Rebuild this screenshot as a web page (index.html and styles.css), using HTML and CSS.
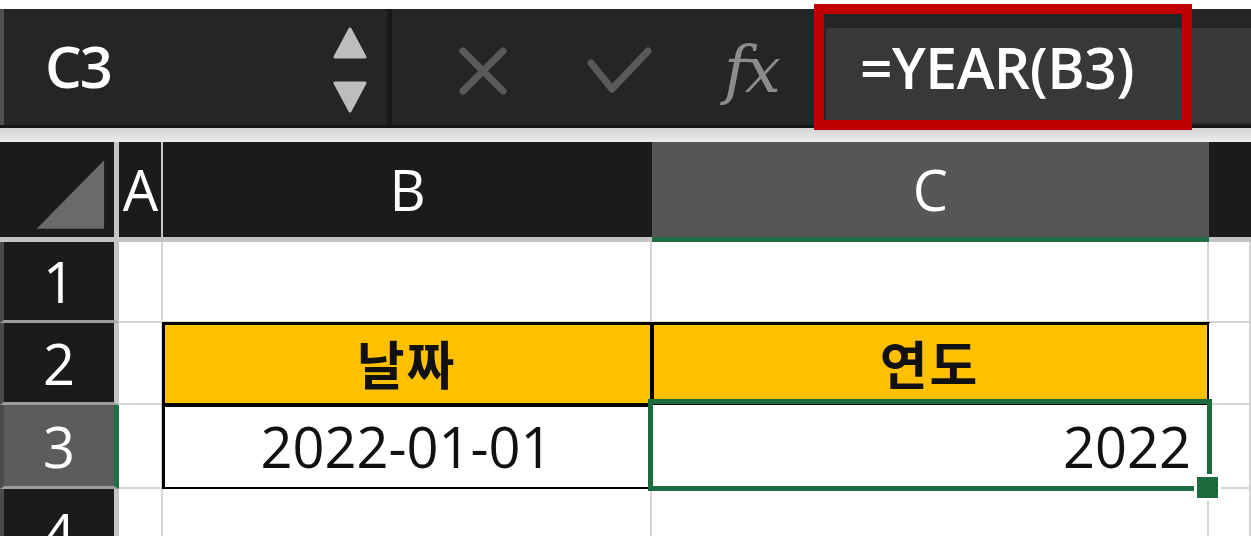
FILE: index.html
```html
<!DOCTYPE html>
<html lang="ko">
<head>
    <meta charset="UTF-8">
    <meta name="viewport" content="width=device-width, initial-scale=1.0">
    <title>YEAR 함수</title>
    <link rel="stylesheet" href="styles.css">
</head>
<body>
    <div class="toolbar">
        <div class="namebox">
            <span class="ref">C3</span>
            <svg class="spin" width="34" height="86" viewBox="0 0 34 86">
                <path d="M17 2 L32 30 L2 30 Z" />
                <path d="M2 56 L32 56 L17 84 Z" />
            </svg>
        </div>
        <div class="divider"></div>
        <div class="actions">
            <svg class="cancel" width="50" height="50" viewBox="0 0 50 50">
                <path d="M5 5 L45 45 M45 5 L5 45" />
            </svg>
            <svg class="enter" width="66" height="50" viewBox="0 0 66 50">
                <path d="M5 17 L26 43 L62 5" />
            </svg>
            <span class="fx">fx</span>
        </div>
        <div class="formula">=YEAR(B3)</div>
        <div class="highlight"></div>
    </div>
    <div class="rule"></div>

    <div class="sheet">
        <div class="corner">
            <svg width="115" height="95" viewBox="0 0 115 95">
                <path d="M37 87 L105 87 L105 18 Z" />
            </svg>
        </div>
        <div class="colhead col-a">A</div>
        <div class="colhead col-b">B</div>
        <div class="colhead col-c active">C</div>
        <div class="colhead col-d"></div>

        <div class="rowhead">1</div>
        <div class="cell"></div>
        <div class="cell"></div>
        <div class="cell"></div>
        <div class="cell"></div>

        <div class="rowhead">2</div>
        <div class="cell"></div>
        <div class="cell boxed title">날짜</div>
        <div class="cell boxed title">연도</div>
        <div class="cell"></div>

        <div class="rowhead active">3</div>
        <div class="cell"></div>
        <div class="cell boxed plain">2022-01-01</div>
        <div class="cell plain number selected">2022</div>
        <div class="cell"></div>

        <div class="rowhead">4</div>
        <div class="cell"></div>
        <div class="cell"></div>
        <div class="cell"></div>
        <div class="cell"></div>
    </div>
</body>
</html>
```

FILE: styles.css
```css
body {
    margin: 0;
    background: #ffffff;
    font-family: 'Open Sans', 'Noto Sans', sans-serif;
    overflow: hidden;
    height: 536px;
}
.toolbar {
    position: relative;
    display: flex;
    height: 116px;
    margin-top: 9px;
    background: #252525;
    border-left: 4px solid #505050;
}
.namebox {
    display: flex;
    align-items: center;
    width: 383px;
    padding-left: 41px;
    box-sizing: border-box;
}
.ref {
    color: #ffffff;
    font-size: 58px;
    font-weight: 600;
    letter-spacing: -2px;
    line-height: 1;
    margin-top: -2px;
}
.spin {
    margin-left: auto;
    margin-right: 20px;
    margin-top: 6px;
}
.spin path {
    fill: #bdbdbd;
    stroke: #bdbdbd;
    stroke-width: 3;
    stroke-linejoin: round;
}
.divider {
    width: 5px;
    background: #181818;
}
.actions {
    display: flex;
    align-items: center;
    width: 434px;
}
.actions svg path {
    fill: none;
    stroke: #5a5a5a;
    stroke-width: 7;
    stroke-linecap: round;
    stroke-linejoin: round;
}
.cancel {
    margin-left: 66px;
    margin-top: 8px;
}
.enter {
    margin-left: 78px;
    margin-top: 8px;
}
.fx {
    margin-left: 72px;
    margin-top: 6px;
    color: #8c8c8c;
    font-family: 'DejaVu Serif', serif;
    font-style: italic;
    font-size: 64px;
    line-height: 1;
    letter-spacing: -3px;
}
.formula {
    flex: 1;
    align-self: flex-start;
    margin-top: 19px;
    height: 95px;
    padding: 10px 0 0 34px;
    box-sizing: border-box;
    background: #383838;
    color: #ffffff;
    font-size: 57px;
    font-weight: 600;
    letter-spacing: -0.5px;
    line-height: 58px;
}
.highlight {
    position: absolute;
    left: 810px;
    top: -5px;
    width: 378px;
    height: 126px;
    border: 10px solid #c00000;
    box-sizing: border-box;
}
.rule {
    height: 17px;
    border-top: 3px solid #161616;
    box-sizing: border-box;
    background: linear-gradient(#d2d2d2, #ececec);
}
.sheet {
    display: grid;
    grid-template-columns: 119px 44px 489px 557px 1fr;
    grid-template-rows: 100px 81px 82px 84px 90px;
}
.corner, .colhead, .rowhead, .cell {
    box-sizing: border-box;
    display: flex;
    align-items: center;
    justify-content: center;
    font-size: 56px;
    line-height: 1;
}
.corner {
    background: #1b1b1b;
    border-right: 5px solid #c4c4c4;
    border-bottom: 5px solid #c4c4c4;
}
.corner svg path {
    fill: #6a6a6a;
}
.colhead {
    background: #1b1b1b;
    color: #ffffff;
    border-bottom: 5px solid #c4c4c4;
    padding-bottom: 2px;
}
.col-a {
    border-right: 2px solid #c4c4c4;
    letter-spacing: -1px;
}
.colhead.active {
    background: #565656;
    border-bottom: 5px solid #1e6e42;
}
.rowhead {
    background: #1b1b1b;
    color: #ffffff;
    border-left: 4px solid #4a4a4a;
    border-right: 5px solid #c4c4c4;
    border-bottom: 3px solid #9c9c9c;
}
.rowhead.active {
    background: #5c5c5c;
    border-right-color: #1e7145;
}
.cell {
    background: #ffffff;
    border-right: 2px solid #d6d6d6;
    border-bottom: 2px solid #d6d6d6;
    color: #111111;
}
.cell.boxed {
    outline: 3px solid #000000;
    outline-offset: -2px;
}
.cell.title {
    background: #ffc000;
    font-family: 'Noto Sans CJK KR', sans-serif;
    font-weight: 700;
    font-size: 52px;
    letter-spacing: 2px;
}
.cell.plain {
    font-size: 56px;
}
.cell.number {
    justify-content: flex-end;
    padding-right: 16px;
}
.cell.selected {
    position: relative;
}
.cell.selected::after {
    content: '';
    position: absolute;
    top: -6px;
    left: -4px;
    right: -5px;
    bottom: -4px;
    border: 5px solid #1b6b3e;
}
.cell.selected::before {
    content: '';
    position: absolute;
    left: 542px;
    top: 69px;
    width: 21px;
    height: 21px;
    background: #1b6b3e;
    border: 3px solid #ffffff;
    z-index: 1;
}
```
